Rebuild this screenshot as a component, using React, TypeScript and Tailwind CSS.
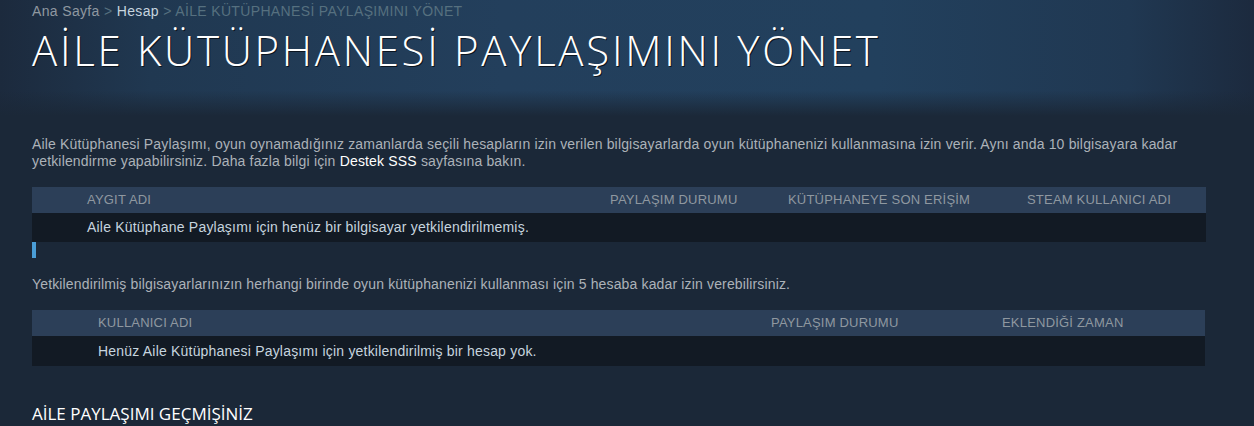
const crumbs = (
  <div className="pt-[3px] text-[14px] leading-[17px] tracking-[0.35px] text-[#8f98a0]">
    <span>Ana Sayfa</span>
    <span className="text-[#56707f]"> &gt; </span>
    <span className="text-[#c6d4df]">Hesap</span>
    <span className="text-[#56707f]"> &gt; AİLE KÜTÜPHANESİ PAYLAŞIMINI YÖNET</span>
  </div>
);

const App = () => {
  return (
    <div
      className="min-h-[426px] w-full bg-[#1b2838] text-[#c6d4df]"
      style={{ fontFamily: '"Liberation Sans", Arial, sans-serif' }}
    >
      <div className="h-[116px] bg-[linear-gradient(90deg,#1c2a3d_0%,#203851_12%,#233f5c_40%,#22405d_70%,#203852_90%,#1c2a3e_100%)]">
        <div className="h-full bg-[linear-gradient(180deg,rgba(27,40,56,0)_0%,rgba(27,40,56,0)_78%,#1b2838_100%)] px-[32px]">
          {crumbs}
          <h1
            className="mt-[5px] text-[42px] leading-[50px] font-light tracking-[2.7px] text-white [text-shadow:1px_1px_0_#0b1520]"
            style={{ fontFamily: '"Open Sans", "Noto Sans", sans-serif' }}
          >
            AİLE KÜTÜPHANESİ PAYLAŞIMINI YÖNET
          </h1>
        </div>
      </div>

      <div className="w-[1206px] pl-[32px] pt-[20px]">
        <p className="text-[14px] leading-[17px] tracking-[0.17px] text-[#acb2b8]">
          Aile Kütüphanesi Paylaşımı, oyun oynamadığınız zamanlarda seçili hesapların izin verilen bilgisayarlarda oyun kütüphanenizi kullanmasına izin verir. Aynı anda 10 bilgisayara kadar yetkilendirme yapabilirsiniz. Daha fazla bilgi için{" "}
          <span className="text-white">Destek SSS</span> sayfasına bakın.
        </p>

        <div className="mt-[17px]">
          <div className="grid h-[26px] grid-cols-[578px_178px_239px_1fr] items-center bg-[#2c3f58] text-[13px] tracking-[0.2px] text-[#8f98a0]">
            <div className="pl-[55px]">AYGIT ADI</div>
            <div>PAYLAŞIM DURUMU</div>
            <div>KÜTÜPHANEYE SON ERİŞİM</div>
            <div>STEAM KULLANICI ADI</div>
          </div>
          <div className="flex h-[29px] items-center bg-[#121a24] pl-[55px] text-[14px] tracking-[0.2px] text-[#c6d4df]">
            Aile Kütüphane Paylaşımı için henüz bir bilgisayar yetkilendirilmemiş.
          </div>
          <div className="h-[16px] w-[4px] bg-[#4a9dd6]" />
        </div>

        <p className="mt-[18px] text-[14px] leading-[17px] tracking-[0.15px] text-[#acb2b8]">
          Yetkilendirilmiş bilgisayarlarınızın herhangi birinde oyun kütüphanenizi kullanması için 5 hesaba kadar izin verebilirsiniz.
        </p>

        <div className="mt-[17px] w-[1173px]">
          <div className="grid h-[26px] grid-cols-[739px_231px_1fr] items-center bg-[#2c3f58] text-[13px] tracking-[0.2px] text-[#8f98a0]">
            <div className="pl-[66px]">KULLANICI ADI</div>
            <div>PAYLAŞIM DURUMU</div>
            <div>EKLENDİĞİ ZAMAN</div>
          </div>
          <div className="flex h-[30px] items-center bg-[#121a24] pl-[66px] text-[14px] tracking-[0.2px] text-[#c6d4df]">
            Henüz Aile Kütüphanesi Paylaşımı için yetkilendirilmiş bir hesap yok.
          </div>
        </div>

        <h2
          className="mt-[36px] text-[17px] leading-[24px] text-white"
          style={{ fontFamily: '"Open Sans", "Noto Sans", sans-serif' }}
        >
          AİLE PAYLAŞIMI GEÇMİŞİNİZ
        </h2>
      </div>
    </div>
  );
};

export default App;
